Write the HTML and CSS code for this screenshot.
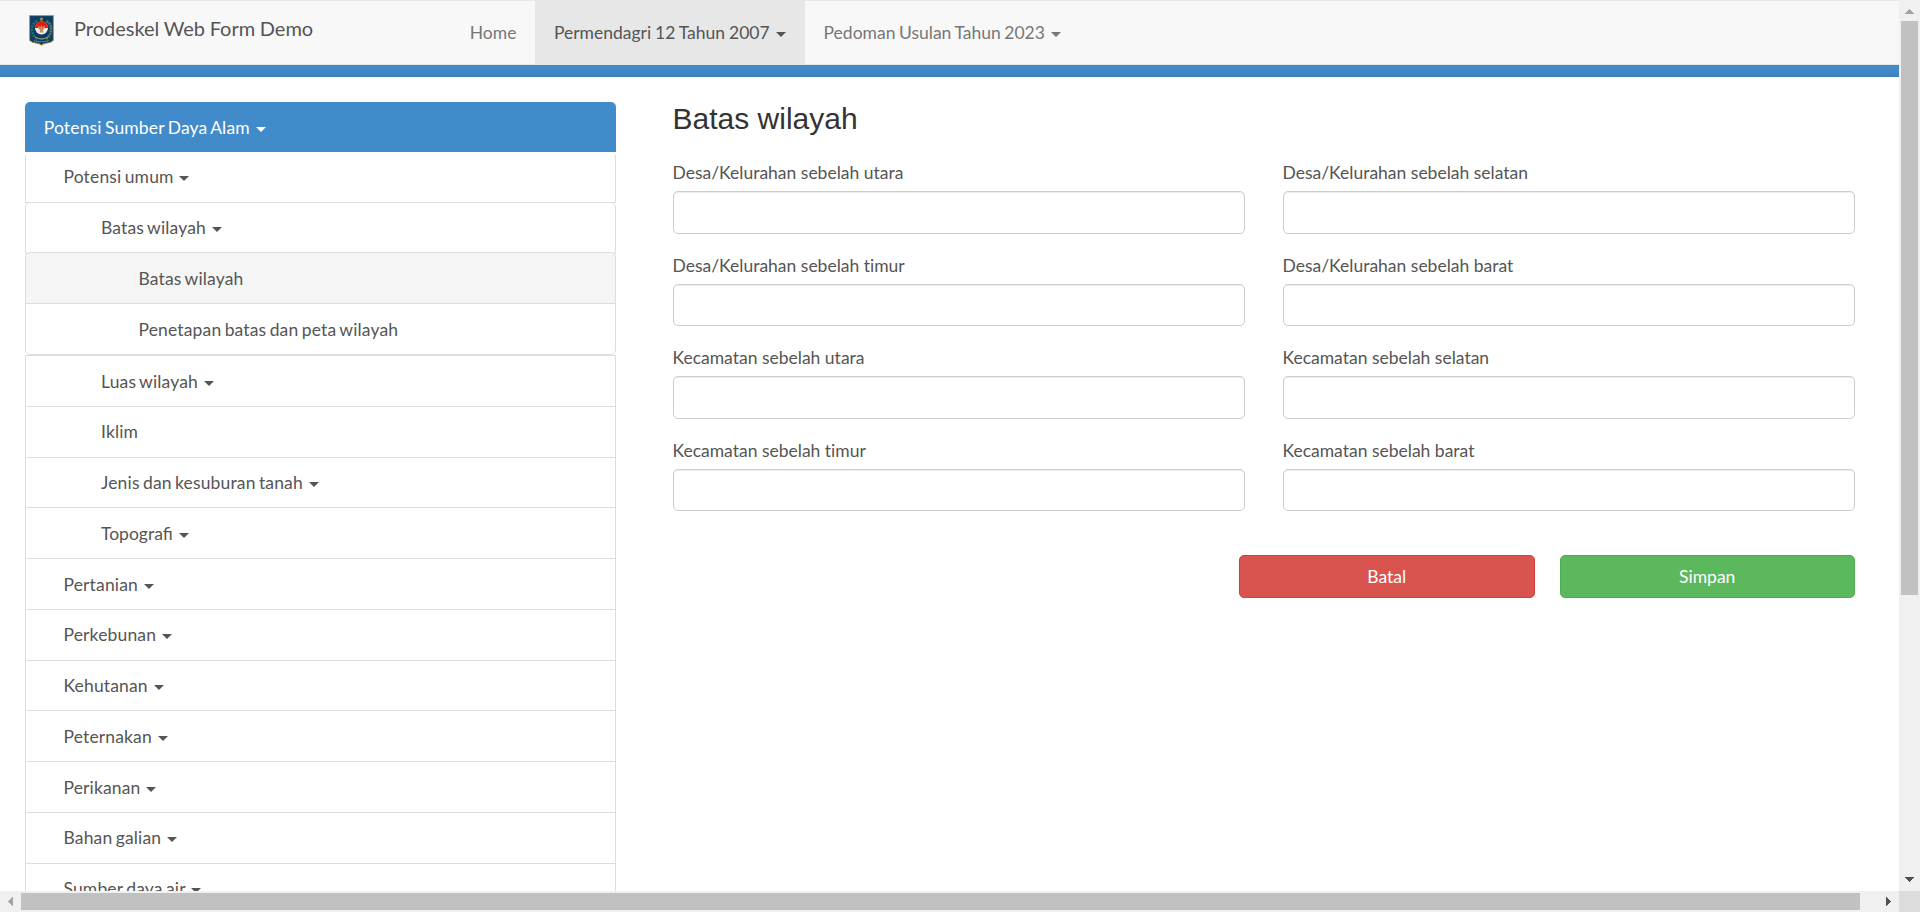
FILE: index.html
```
<!DOCTYPE html>
<html lang="id">
<head>
<meta charset="utf-8">
<title>Prodeskel Web Form Demo</title>
<link rel="stylesheet" href="styles.css">
</head>
<body>
<div class="window">
  <div class="page">
    <header class="navbar">
      <a class="brand">
        <svg class="logo" width="25" height="31" viewBox="0 0 25 31">
          <path d="M.6 .6H24.4V25.5Q22 28 17 28.300Q14 28.800 12.500 30.300Q11 28.800 8 28.300Q3 28 .6 25.500Z" fill="#0b3d66" stroke="#b39a55" stroke-width="1"/>
          <path d="M8 6Q3 9 3 15Q3.500 21 8 24" fill="none" stroke="#2b7a5c" stroke-width="2.200" stroke-dasharray="2 1.200"/>
          <path d="M17.500 6Q22.500 9 22 15Q21.500 21 17 24" fill="none" stroke="#6f7b46" stroke-width="2.400" stroke-dasharray="2 .7"/>
          <path d="M12.500 2L13.200 3.300L14.500 3.500L13.500 4.500L13.700 6L12.500 5.300L11.300 6L11.500 4.500L10.500 3.500L11.800 3.300Z" fill="#b99b45"/>
          <circle cx="12.500" cy="13" r="6.500" fill="#f4efec"/>
          <path d="M6 13A6.500 6.500 0 0 1 19 13Z" fill="#e9150f"/>
          <path d="M8.500 10.500L11.500 12L12.500 9.500L13.500 12L16.500 10.500L15.300 14L13.700 15L14.500 17.500H10.500L11.300 15L9.700 14Z" fill="#c58a55"/>
          <path d="M6 22Q12.500 26 19 22" fill="none" stroke="#8b8f70" stroke-width="1.300"/>
          <path d="M5 25.500Q12.500 28 20 25.500" fill="none" stroke="#7893a5" stroke-width="1.100" stroke-dasharray="1.500 .6"/>
        </svg>
        <span class="brand-name">Prodeskel Web Form Demo</span>
      </a>
      <nav class="menu">
        <a class="menu-link">Home</a>
        <a class="menu-link current">Permendagri 12 Tahun 2007 <b class="caret"></b></a>
        <a class="menu-link">Pedoman Usulan Tahun 2023 <b class="caret"></b></a>
      </nav>
    </header>
    <div class="stripe"></div>
    <div class="content">
      <aside class="sidebar">
        <a class="heading">Potensi Sumber Daya Alam <b class="caret"></b></a>
        <div class="group top-group">
          <a class="item l1">Potensi umum <b class="caret"></b></a>
          <div class="group">
            <a class="item l2">Batas wilayah <b class="caret"></b></a>
            <div class="group">
              <a class="item l3 selected">Batas wilayah</a>
              <a class="item l3">Penetapan batas dan peta wilayah</a>
            </div>
            <a class="item l2">Luas wilayah <b class="caret"></b></a>
            <a class="item l2">Iklim</a>
            <a class="item l2">Jenis dan kesuburan tanah <b class="caret"></b></a>
            <a class="item l2 open-end">Topografi <b class="caret"></b></a>
          </div>
          <a class="item l1">Pertanian <b class="caret"></b></a>
          <a class="item l1">Perkebunan <b class="caret"></b></a>
          <a class="item l1">Kehutanan <b class="caret"></b></a>
          <a class="item l1">Peternakan <b class="caret"></b></a>
          <a class="item l1">Perikanan <b class="caret"></b></a>
          <a class="item l1">Bahan galian <b class="caret"></b></a>
          <a class="item l1">Sumber daya air <b class="caret"></b></a>
        </div>
      </aside>
      <main class="form">
        <h3 class="title">Batas wilayah</h3>
        <div class="fields">
          <label class="field">Desa/Kelurahan sebelah utara<input class="control" type="text"></label>
          <label class="field">Desa/Kelurahan sebelah selatan<input class="control" type="text"></label>
          <label class="field">Desa/Kelurahan sebelah timur<input class="control" type="text"></label>
          <label class="field">Desa/Kelurahan sebelah barat<input class="control" type="text"></label>
          <label class="field">Kecamatan sebelah utara<input class="control" type="text"></label>
          <label class="field">Kecamatan sebelah selatan<input class="control" type="text"></label>
          <label class="field">Kecamatan sebelah timur<input class="control" type="text"></label>
          <label class="field">Kecamatan sebelah barat<input class="control" type="text"></label>
        </div>
        <div class="actions">
          <button class="btn danger">Batal</button>
          <button class="btn success">Simpan</button>
        </div>
      </main>
    </div>
  </div>
  <div class="vbar">
    <svg class="arrow" width="21" height="21" viewBox="0 0 21 21"><path d="M6 14L10.500 9L15 14Z" fill="#a3a3a3"/></svg>
    <div class="vthumb"></div>
    <svg class="arrow end" width="21" height="21" viewBox="0 0 21 21"><path d="M6 7L10.500 12L15 7Z" fill="#505050"/></svg>
  </div>
  <div class="hbar">
    <svg class="arrow" width="21" height="21" viewBox="0 0 21 21"><path d="M13 6L8 10.500L13 15Z" fill="#a3a3a3"/></svg>
    <div class="hthumb"></div>
    <svg class="arrow end" width="21" height="21" viewBox="0 0 21 21"><path d="M8 6L13 10.500L8 15Z" fill="#505050"/></svg>
  </div>
  <div class="corner"></div>
</div>
</body>
</html>
```

FILE: styles.css
```
* { box-sizing: border-box; }
html, body { margin: 0; height: 100%; overflow: hidden; }
body { font-family: Lato, sans-serif; font-size: 17.5px; line-height: 25px; color: #555; background: #fff; }
.window { display: grid; grid-template-columns: 1899px 21px; grid-template-rows: 891px 21px; width: 1920px; height: 912px; }
.page { overflow: hidden; }

.navbar { display: flex; height: 65px; background: #f8f8f8; border-top: 1px solid #e7e7e7; border-bottom: 1px solid #e7e7e7; }
.brand { display: flex; width: 451px; padding: 14px 0 0 29px; }
.logo { flex: none; }
.brand-name { margin-left: 20px; font-size: 20px; line-height: 26px; word-spacing: -.5px; white-space: nowrap; }
.menu { display: flex; }
.menu-link { padding: 19px 18.75px; color: #777; word-spacing: -.9px; white-space: nowrap; }
.menu-link.current { background: #e7e7e7; color: #555; word-spacing: -.55px; }
.caret { display: inline-block; width: 0; height: 0; margin-left: 2.5px; vertical-align: middle; border-top: 5px solid; border-left: 5px solid transparent; border-right: 5px solid transparent; }
.stripe { height: 12px; background: linear-gradient(#428bca 40%, #3e7fba); }

.content { display: flex; padding: 24.9px 44px 0 25px; }
.sidebar { width: 591px; flex: none; letter-spacing: .15px; word-spacing: -1.3px; }
.heading { display: block; height: 50px; padding: 13.5px 18.75px 11.5px; background: #428bca; color: #fff; border-radius: 5px 5px 0 0; }
.item { display: block; height: 52px; margin-bottom: -1.25px; padding: 12.5px 18.75px; border: 1px solid #ddd; background: #fff; }
.group > .item:first-child { border-top-left-radius: 5px; border-top-right-radius: 5px; }
.group > .item:last-child { margin-bottom: 0; border-bottom-left-radius: 5px; border-bottom-right-radius: 5px; }
.group > .item.open-end:last-child { margin-bottom: -1.25px; border-radius: 0; letter-spacing: normal; word-spacing: -.6px; }
.top-group > .item:first-child { height: 51px; border-top: 0; }
.l1 { padding-left: 37.5px; }
.l2 { padding-left: 75px; }
.l3 { padding-left: 112.5px; }
.selected { background: #f5f5f5; }

.form { flex: 1; margin-left: 56.5px; }
.title { margin: 0 0 25.4px; font: 500 30px/33px "Liberation Sans", Arial, sans-serif; color: #333; }
.fields { display: grid; grid-template-columns: 1fr 1fr; column-gap: 37.5px; row-gap: 18.75px; }
.field { display: block; height: 73.75px; font-variant-ligatures: none; }
.control { display: block; width: 100%; height: 42.5px; margin-top: 6.05px; border: 1px solid #ccc; border-radius: 5px; background: #fff; box-shadow: inset 0 1px 1px rgba(0,0,0,.075); outline: 0; }
.actions { display: flex; justify-content: flex-end; gap: 25px; margin-top: 43.5px; }
.btn { width: 295.5px; height: 42.5px; padding: 0; border: 1px solid; border-radius: 5px; color: #fff; font: inherit; }
.danger { background: #d9534f; border-color: #d43f3a; }
.success { background: #5cb85c; border-color: #4cae4c; }

.vbar { display: flex; flex-direction: column; align-items: center; background: #f0f0f0; }
.hbar { display: flex; align-items: center; background: #f0f0f0; }
.arrow { flex: none; display: block; shape-rendering: crispEdges; }
.vthumb { width: 17px; height: 574px; background: #c1c1c1; }
.hthumb { width: 1839px; height: 17px; background: #c1c1c1; }
.vbar .end { margin-top: auto; }
.hbar .end { margin-left: auto; }
.corner { background: #dcdcdc; }
```
